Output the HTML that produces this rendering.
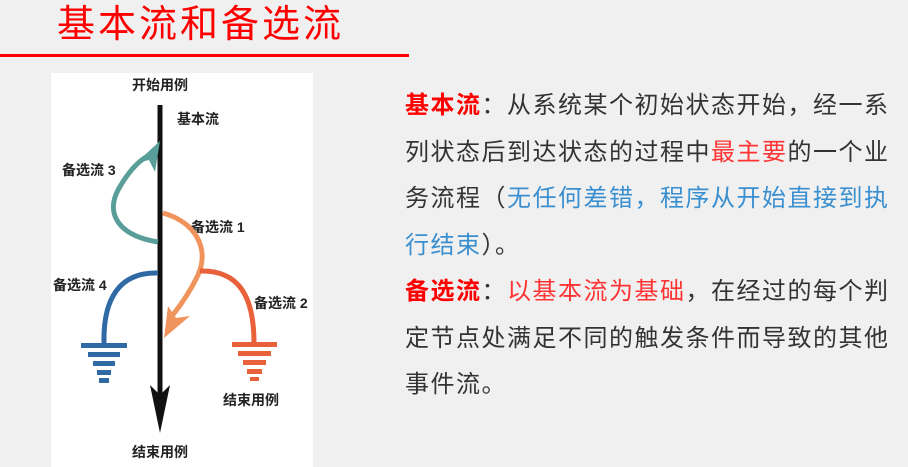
<!DOCTYPE html>
<html><head><meta charset="utf-8"><style>
body{margin:0;width:908px;height:467px;background:#f0f0f0;overflow:hidden;position:relative;font-family:"Liberation Sans","Noto Sans CJK SC",sans-serif}
.t{position:absolute;left:57px;top:0px;font-size:38px;color:#f00;letter-spacing:3px;white-space:nowrap;line-height:50px}
.hr{position:absolute;left:0;top:54px;width:409px;height:3px;background:#f00}
.img{position:absolute;left:51px;top:73px;width:262px;height:394px;background:#fff}
.txt{position:absolute;left:405px;top:83px;font-size:24px;line-height:46.5px;letter-spacing:1.5px;color:#333;white-space:nowrap}
.r{color:#f00;font-weight:bold}.rr{color:#f33}.b{color:#3a8fd0}
</style></head><body>
<div class="t">基本流和备选流</div>
<div class="hr"></div>
<div class="img"></div>
<svg style="position:absolute;left:0;top:0" width="908" height="467">
<g font-family="Liberation Sans,Noto Sans CJK SC,sans-serif" font-size="14" font-weight="bold" fill="#222">
<text x="160" y="90" text-anchor="middle">开始用例</text>
<text x="177" y="124">基本流</text>
<text x="62" y="175">备选流 3</text>
<text x="191" y="232">备选流 1</text>
<text x="53" y="290">备选流 4</text>
<text x="254" y="308">备选流 2</text>
<text x="223" y="405">结束用例</text>
<text x="160" y="457" text-anchor="middle">结束用例</text>
</g>
<line x1="160" y1="105" x2="160" y2="395" stroke="#111" stroke-width="5"/>
<polygon points="150,385 160,395 170,385 160,433" fill="#111"/>
<path d="M158 242 C120 236 105 215 118 190 C128 172 138 162 146 157" stroke="#5a9e9a" stroke-width="5" fill="none"/>
<polygon points="160,141 155,172 149,160 136,163" fill="#5a9e9a"/>
<path d="M163 213 C195 222 210 248 198 275 C190 292 180 306 172 316" stroke="#f0935c" stroke-width="5" fill="none"/>
<polygon points="164,338 168,306 176,318 190,316" fill="#f0935c"/>
<path d="M200 271 C238 270 254 295 254 343" stroke="#e8613a" stroke-width="5" fill="none"/>
<g fill="#e8613a"><rect x="232" y="342" width="45" height="5"/><rect x="238" y="351" width="33" height="5"/><rect x="243" y="360" width="23" height="5"/><rect x="247" y="369" width="15" height="5"/><rect x="250" y="377" width="9" height="4"/></g>
<path d="M158 273 C120 272 103 298 104 343" stroke="#2f6aa5" stroke-width="5" fill="none"/>
<g fill="#2f6aa5"><rect x="81" y="343" width="46" height="5"/><rect x="88" y="352" width="32" height="5"/><rect x="93" y="361" width="22" height="5"/><rect x="97" y="370" width="14" height="5"/><rect x="99" y="378" width="10" height="5"/></g>
</svg>
<div class="txt"><span class="r">基本流</span>：从系统某个初始状态开始，经一系<br>列状态后到达状态的过程中<span class="rr">最主要</span>的一个业<br>务流程（<span class="b">无任何差错，程序从开始直接到执</span><br><span class="b">行结束</span>）。<br><span class="r">备选流</span>：<span class="rr">以基本流为基础</span>，在经过的每个判<br>定节点处满足不同的触发条件而导致的其他<br>事件流。</div>
</body></html>
